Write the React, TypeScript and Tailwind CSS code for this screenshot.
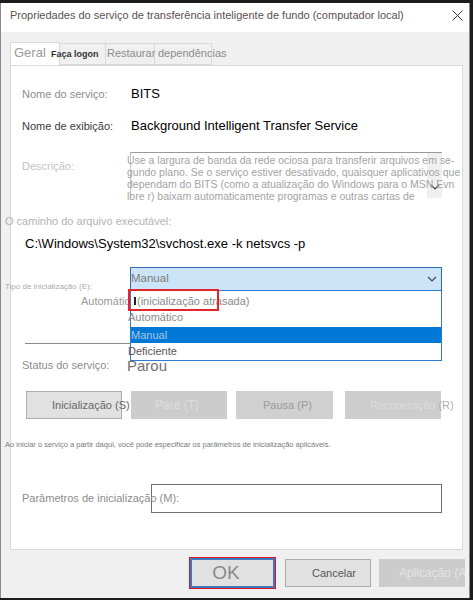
import React from 'react';

function Chevron({ className = '' }: { className?: string }) {
  return (
    <svg width="10" height="6" viewBox="0 0 10 6" className={className} fill="none" stroke="#444" strokeWidth="1.2">
      <path d="M1 1l4 4 4-4" />
    </svg>
  );
}

const descLines = [
  'Use a largura de banda da rede ociosa para transferir arquivos em se-',
  'gundo plano. Se o serviço estiver desativado, quaisquer aplicativos que',
  'dependam do BITS (como a atualização do Windows para o MSN Evn',
  'lbre r) baixam automaticamente programas e outras cartas de',
];

export default function App() {
  return (
    <div className="flex h-[600px] w-[473px] flex-col overflow-hidden bg-[#1c1c1c] font-['Liberation_Sans',Arial,sans-serif]">
      <div className="h-[3px] shrink-0" />
      <div className="flex h-[595px] w-[470px] shrink-0 flex-col border-x border-[#8a8a8a] bg-[#f0f0f0]">
        {/* title bar */}
        <div className="flex h-[29px] shrink-0 items-center justify-between bg-white pb-[4px] pl-[9px] pr-[6px]">
          <span className="text-[11px] text-[#5b4f4f]">
            Propriedades do serviço de transferência inteligente de fundo (computador local)
          </span>
          <svg width="11" height="11" viewBox="0 0 11 11" stroke="#333" strokeWidth="1">
            <path d="M0.5 0.5l10 10M10.5 0.5l-10 10" />
          </svg>
        </div>

        {/* tabs */}
        <div className="ml-[9px] mt-[10px] flex h-[23px] shrink-0 items-end">
          <div className="h-[23px] w-[50px] border border-b-0 border-[#d9d9d9] bg-white pl-[3px] text-[13px] leading-[20px] text-[#9a9a9a]">
            Geral
          </div>
          <div className="relative h-[22px] w-[46px] border-y border-r border-[#d9d9d9]">
            <span className="absolute left-[-9px] top-[4px] whitespace-nowrap text-[9px] font-bold text-[#333]">
              Faça logon
            </span>
          </div>
          <div className="h-[22px] w-[49px] border-y border-r border-[#d9d9d9] pl-[1px] text-[11px] leading-[19px] text-[#8c8c8c]">
            Restaurar
          </div>
          <div className="h-[22px] w-[57px] whitespace-nowrap border-y border-r border-[#d9d9d9] pl-[3px] text-[11px] leading-[19px] text-[#8c8c8c]">
            dependências
          </div>
        </div>

        {/* panel */}
        <div className="relative ml-[9px] h-[485px] w-[453px] shrink-0 border border-[#d9d9d9] bg-white">
          <div className="mt-[18px] flex h-[20px] items-center">
            <div className="w-[120px] pl-[11px] text-[11px] text-[#8c8c8c]">Nome do serviço:</div>
            <div className="text-[13px] text-black">BITS</div>
          </div>
          <div className="mt-[12px] flex h-[20px] items-center">
            <div className="w-[120px] pl-[11px] text-[11px] text-[#3a3a3a]">Nome de exibição:</div>
            <div className="text-[13px] text-black">Background Intelligent Transfer Service</div>
          </div>

          <div className="mt-[16px] flex h-[46px]">
            <div className="w-[119px] pl-[11px] pt-[6px] text-[11px] text-[#c3c3c3]">Descrição:</div>
            <div className="relative w-[312px] border-l border-t border-[#c4c4c4] border-t-[#9a9a9a]">
              <div className="absolute bottom-0 right-0 top-0 flex w-[15px] items-end justify-center bg-[#f0f0f0] pb-[8px]">
                <Chevron />
              </div>
              <div className="absolute left-[-4px] top-[1px] whitespace-nowrap text-[10.5px] leading-[12px] text-[#a3a3a3]">
                {descLines.map((l) => (
                  <div key={l}>{l}</div>
                ))}
              </div>
            </div>
          </div>

          <div className="-ml-[6px] mt-[16px] h-[15px] text-[11px] leading-[15px] text-[#b3b3b3]">
            O caminho do arquivo executável:
          </div>
          <div className="mt-[6px] h-[17px] pl-[14px] text-[13px] leading-[17px] text-black">
            C:\Windows\System32\svchost.exe -k netsvcs -p
          </div>

          <div className="mt-[15px] flex h-[24px]">
            <div className="relative w-[119px]">
              <span className="absolute left-[-6px] top-[15px] whitespace-nowrap text-[8px] leading-[10px] text-[#ababab]">
                Tipo de inicialização (E):
              </span>
            </div>
            <div className="flex w-[312px] items-center justify-between border border-[#2e6db3] bg-[#cce4f7] pr-[4px] text-[11.5px] text-[#7a7a7a]">
              <span>Manual</span>
              <Chevron />
            </div>
          </div>
          <div className="flex h-[20px] items-center">
            <div className="w-[125px] text-right text-[11px] text-[#9a9a9a]">Automático</div>
          </div>

          <div className="ml-[14px] mt-[32px] h-px w-[105px] bg-[#8a8a8a]" />

          <div className="mt-[11px] flex h-[20px] items-center">
            <div className="w-[116px] pl-[11px] text-[11px] text-[#8c8c8c]">Status do serviço:</div>
            <div className="mt-[2px] text-[15px] text-[#707070]">Parou</div>
          </div>

          <div className="mt-[16px] flex h-[28px] pl-[15px] text-[11px]">
            <div className="flex w-[96px] items-center whitespace-nowrap border border-[#adadad] bg-[#e1e1e1] pl-[25px] text-[#666]">
              Inicialização (S)
            </div>
            <div className="ml-[9px] flex w-[96px] items-center whitespace-nowrap bg-[#cccccc] pl-[24px] text-[12px] text-[#dedede]">
              Pare (T)
            </div>
            <div className="ml-[9px] flex w-[97px] items-center whitespace-nowrap bg-[#d0d0d0] pl-[27px] text-[#9a9a9a]">
              Pausa (P)
            </div>
            <div className="ml-[12px] flex w-[96px] items-center whitespace-nowrap bg-[#cdcdcd] pl-[25px] text-[#dcdcdc]">
              Recuperação <span className="ml-[3px] text-[#b0b0b0]">(R)</span>
            </div>
          </div>

          <div className="-ml-[6px] mt-[20px] h-[12px] whitespace-nowrap text-[7.5px] leading-[12px] text-[#7a7a7a]">
            Ao iniciar o serviço a partir daqui, você pode especificar os parâmetros de inicialização aplicáveis.
          </div>

          <div className="mt-[33px] flex h-[29px] items-center">
            <div className="relative z-10 w-[140px] whitespace-nowrap pl-[11px] text-[11px] text-[#8c8c8c]">
              Parâmetros de inicialização (M):
            </div>
            <div className="h-full w-[291px] border border-[#707070] bg-white" />
          </div>

          {/* open dropdown list */}
          <div className="absolute left-[119px] top-[224px] z-20 flex w-[312px] flex-col border border-[#2e7bd0] bg-white text-[11px]">
            <div className="flex h-[20px] items-center pl-[3px] text-[#8a8a8a]">
              <span className="mr-[1px] h-[8px] w-[2px] bg-[#222]" />
              (inicialização atrasada)
            </div>
            <div className="-ml-[3px] flex h-[16px] items-center pb-[3px] text-[#8a8a8a]">Automático</div>
            <div className="flex h-[16px] items-center bg-[#0078d7] text-[#a9c6e3]">Manual</div>
            <div className="-ml-[3px] flex h-[17px] items-center text-[#555]">Deficiente</div>
          </div>
          <div className="absolute left-[117px] top-[223px] z-30 h-[22px] w-[91px] border-2 border-[#e3242b]" />
        </div>

        {/* dialog buttons */}
        <div className="mt-[7px] flex h-[32px] shrink-0 items-center justify-end pr-[4px]">
          <div className="h-[32px] w-[87px] border border-[#e0141e]">
            <div className="flex h-full items-center justify-center border-2 border-[#3f78c0] bg-[#e1e1e1] pr-[13px] text-[19px] text-[#8a8a8a]">
              OK
            </div>
          </div>
          <div className="ml-[9px] flex h-[28px] w-[86px] items-center justify-center border border-[#adadad] bg-[#e1e1e1] pl-[12px] text-[11px] text-[#555]">
            Cancelar
          </div>
          <div className="ml-[8px] flex h-[28px] w-[86px] items-center overflow-hidden whitespace-nowrap bg-[#cccccc] pl-[20px] text-[12px] text-[#e3e3e3]">
            Aplicação (A
          </div>
        </div>
      </div>
    </div>
  );
}
